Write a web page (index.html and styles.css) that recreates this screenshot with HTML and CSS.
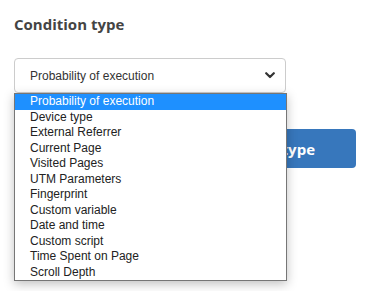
FILE: index.html
```html
<!DOCTYPE html>
<html lang="en">
<head>
    <meta charset="UTF-8" />
    <meta name="viewport" content="width=device-width, initial-scale=1.0" />
    <title>Condition type</title>
    <link rel="stylesheet" href="styles.css">
</head>
<body>
<main class="panel">
    <h2 class="panel-title">Condition type</h2>

    <div class="select-wrap">
        <div class="select-box">
            <span>Probability of execution</span>
            <svg class="chevron" width="10" height="7" viewBox="0 0 10 7">
                <path d="M1.2 1.2 L5 5 L8.8 1.2" fill="none" stroke="#333" stroke-width="2.2" stroke-linecap="round" stroke-linejoin="round"/>
            </svg>
        </div>

        <ul class="select-menu">
            <li class="active">Probability of execution</li>
            <li>Device type</li>
            <li>External Referrer</li>
            <li>Current Page</li>
            <li>Visited Pages</li>
            <li>UTM Parameters</li>
            <li>Fingerprint</li>
            <li>Custom variable</li>
            <li>Date and time</li>
            <li>Custom script</li>
            <li>Time Spent on Page</li>
            <li>Scroll Depth</li>
        </ul>
    </div>

    <div class="actions">
        <button class="btn-primary">Add condition type</button>
    </div>
</main>
</body>
</html>
```

FILE: styles.css
```css
:root {
    --text: #444;
    --blue: #3777bc;
    --highlight: #1e90ff;
}

* {
    box-sizing: border-box;
    margin: 0;
    padding: 0;
}

html,
body {
    min-height: 100vh;
}

body {
    font-family: 'Open Sans', sans-serif;
    background: #fff;
    color: var(--text);
}

.panel {
    min-height: 100vh;
    padding: 13px 13px 0 14px;
}

.panel-title {
    font-size: 15px;
    font-weight: 700;
    line-height: 22px;
    color: var(--text);
}

.select-wrap {
    position: relative;
    width: 272px;
    margin-top: 23px;
}

.select-box {
    display: flex;
    align-items: center;
    justify-content: space-between;
    height: 35px;
    padding: 0 10px 0 15px;
    border: 1px solid #ccc;
    border-radius: 4px;
    font-family: 'Liberation Sans', Arial, sans-serif;
    font-size: 12px;
    color: #333;
}

.chevron {
    display: block;
}

.select-menu {
    position: absolute;
    top: 35px;
    left: 0;
    width: 273px;
    list-style: none;
    background: #fff;
    border: 1px solid #767676;
    box-shadow: 0 3px 10px rgba(0, 0, 0, 0.25);
    font-family: 'Liberation Sans', Arial, sans-serif;
    font-size: 12px;
    color: #222;
    z-index: 10;
}

.select-menu li {
    height: 15.5px;
    line-height: 15.5px;
    padding-left: 15px;
}

.select-menu li.active {
    background: var(--highlight);
    color: #fff;
}

.actions {
    display: flex;
    justify-content: flex-end;
    margin-top: 36px;
}

.btn-primary {
    height: 39px;
    padding: 0 41px;
    border: none;
    border-radius: 4px;
    background: var(--blue);
    color: #fff;
    font-family: 'Open Sans', sans-serif;
    font-size: 15px;
    font-weight: 700;
}
```
